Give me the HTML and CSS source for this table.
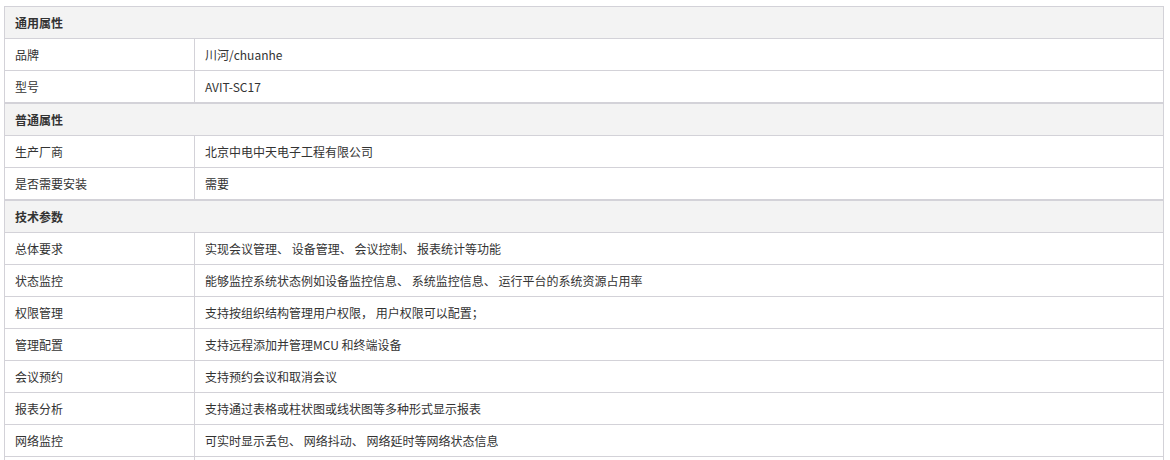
FILE: index.html
```html
<!DOCTYPE html>
<html lang="zh-CN">
<head>
<meta charset="utf-8">
<title>规格参数</title>
<link rel="stylesheet" href="styles.css">
</head>
<body>
<div class="specs">
  <section class="group">
    <div class="group-title">通用属性</div>
    <div class="row"><div class="k">品牌</div><div class="v">川河/chuanhe</div></div>
    <div class="row"><div class="k">型号</div><div class="v">AVIT-SC17</div></div>
  </section>
  <section class="group">
    <div class="group-title">普通属性</div>
    <div class="row"><div class="k">生产厂商</div><div class="v">北京中电中天电子工程有限公司</div></div>
    <div class="row"><div class="k">是否需要安装</div><div class="v">需要</div></div>
  </section>
  <section class="group">
    <div class="group-title">技术参数</div>
    <div class="row"><div class="k">总体要求</div><div class="v">实现会议管理、 设备管理、 会议控制、 报表统计等功能</div></div>
    <div class="row"><div class="k">状态监控</div><div class="v">能够监控系统状态例如设备监控信息、 系统监控信息、 运行平台的系统资源占用率</div></div>
    <div class="row"><div class="k">权限管理</div><div class="v">支持按组织结构管理用户权限， 用户权限可以配置；</div></div>
    <div class="row"><div class="k">管理配置</div><div class="v">支持远程添加并管理MCU 和终端设备</div></div>
    <div class="row"><div class="k">会议预约</div><div class="v">支持预约会议和取消会议</div></div>
    <div class="row"><div class="k">报表分析</div><div class="v">支持通过表格或柱状图或线状图等多种形式显示报表</div></div>
    <div class="row"><div class="k">网络监控</div><div class="v">可实时显示丢包、 网络抖动、 网络延时等网络状态信息</div></div>
    <div class="row"><div class="k">&nbsp;</div><div class="v">&nbsp;</div></div>
  </section>
</div>
</body>
</html>
```

FILE: styles.css
```css
html, body {
  margin: 0;
  padding: 0;
  background: #ffffff;
}
body {
  padding: 6px 4px;
  font-family: "Noto Sans CJK SC", "Microsoft YaHei", sans-serif;
  font-size: 12px;
  color: #333333;
}
.specs {
  width: 1160px;
  display: flex;
  flex-direction: column;
}
.group {
  border: 1px solid #d3d2d8;
  display: flex;
  flex-direction: column;
}
.group-title {
  height: 31px;
  line-height: 31px;
  padding-left: 10px;
  background: #f3f3f3;
  font-weight: bold;
}
.row {
  display: flex;
  height: 31px;
  border-top: 1px solid #d3d2d8;
}
.k {
  width: 179px;
  padding-left: 10px;
  border-right: 1px solid #d3d2d8;
  line-height: 31px;
}
.v {
  flex: 1;
  padding-left: 10px;
  line-height: 31px;
}
```
